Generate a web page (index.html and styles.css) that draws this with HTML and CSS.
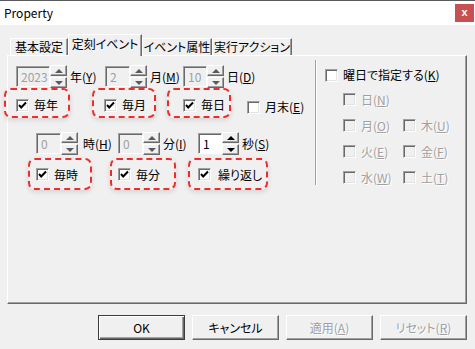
FILE: index.html
```html
<!DOCTYPE html>
<html lang="ja">
<head>
    <meta charset="UTF-8">
    <title>Property</title>
    <link rel="stylesheet" href="styles.css">
</head>
<body>
<div class="window">
    <div class="titlebar">
        <span class="title">Property</span>
        <span class="close">x</span>
    </div>

    <div class="tabs">
        <div class="tab tab-basic">基本設定</div>
        <div class="tab tab-event active">定刻イベント</div>
        <div class="tab tab-attr">イベント属性</div>
        <div class="tab tab-action">実行アクション</div>
    </div>

    <div class="pane">
        <div class="left">
            <!-- date spinners -->
            <div class="spin-row date-row">
                <div class="field year-field">
                    <div class="edit off wide">2023</div>
                    <div class="arrows dim"><span class="arrow up"></span><span class="arrow down"></span></div>
                    <span class="unit">年(<u>Y</u>)</span>
                </div>
                <div class="field month-field">
                    <div class="edit off">2</div>
                    <div class="arrows dim"><span class="arrow up"></span><span class="arrow down"></span></div>
                    <span class="unit">月(<u>M</u>)</span>
                </div>
                <div class="field">
                    <div class="edit off narrow">10</div>
                    <div class="arrows dim"><span class="arrow up"></span><span class="arrow down"></span></div>
                    <span class="unit">日(<u>D</u>)</span>
                </div>
            </div>

            <div class="mark-row date-marks">
                <label class="mark m-year">
                    <span class="cb"><svg viewBox="0 0 9 9"><polyline points="1,4 3.2,6.5 8,1.5"/></svg></span>
                    <span>毎年</span>
                </label>
                <label class="mark m-month">
                    <span class="cb"><svg viewBox="0 0 9 9"><polyline points="1,4 3.2,6.5 8,1.5"/></svg></span>
                    <span>毎月</span>
                </label>
                <label class="mark m-day">
                    <span class="cb"><svg viewBox="0 0 9 9"><polyline points="1,4 3.2,6.5 8,1.5"/></svg></span>
                    <span>毎日</span>
                </label>
                <label class="check month-end">
                    <span class="cb"></span>
                    <span>月末(<u>E</u>)</span>
                </label>
            </div>

            <!-- time spinners -->
            <div class="spin-row time-row">
                <div class="field hour-field">
                    <div class="edit off">0</div>
                    <div class="arrows dim"><span class="arrow up"></span><span class="arrow down"></span></div>
                    <span class="unit gap5">時(<u>H</u>)</span>
                </div>
                <div class="field minute-field">
                    <div class="edit off">0</div>
                    <div class="arrows dim"><span class="arrow up"></span><span class="arrow down"></span></div>
                    <span class="unit">分(<u>I</u>)</span>
                </div>
                <div class="field">
                    <div class="edit narrow">1</div>
                    <div class="arrows"><span class="arrow up"></span><span class="arrow down"></span></div>
                    <span class="unit">秒(<u>S</u>)</span>
                </div>
            </div>

            <div class="mark-row time-marks">
                <label class="mark m-hour">
                    <span class="cb"><svg viewBox="0 0 9 9"><polyline points="1,4 3.2,6.5 8,1.5"/></svg></span>
                    <span>毎時</span>
                </label>
                <label class="mark m-minute">
                    <span class="cb"><svg viewBox="0 0 9 9"><polyline points="1,4 3.2,6.5 8,1.5"/></svg></span>
                    <span>毎分</span>
                </label>
                <label class="mark m-repeat">
                    <span class="cb"><svg viewBox="0 0 9 9"><polyline points="1,4 3.2,6.5 8,1.5"/></svg></span>
                    <span>繰り返し</span>
                </label>
            </div>
        </div>

        <!-- weekday group -->
        <div class="group">
            <label class="check">
                <span class="cb"></span>
                <span>曜日で指定する(<u>K</u>)</span>
            </label>
            <div class="days">
                <div class="day-row">
                    <span class="check off"><span class="cb"></span><span>日(<u>N</u>)</span></span>
                </div>
                <div class="day-row">
                    <span class="check off"><span class="cb"></span><span>月(<u>O</u>)</span></span>
                    <span class="check off"><span class="cb"></span><span>木(<u>U</u>)</span></span>
                </div>
                <div class="day-row">
                    <span class="check off"><span class="cb"></span><span>火(<u>E</u>)</span></span>
                    <span class="check off"><span class="cb"></span><span>金(<u>F</u>)</span></span>
                </div>
                <div class="day-row">
                    <span class="check off"><span class="cb"></span><span>水(<u>W</u>)</span></span>
                    <span class="check off"><span class="cb"></span><span>土(<u>T</u>)</span></span>
                </div>
            </div>
        </div>
    </div>

    <div class="buttons">
        <button class="btn default">OK</button>
        <button class="btn">キャンセル</button>
        <button class="btn off">適用(<u>A</u>)</button>
        <button class="btn off">リセット(<u>R</u>)</button>
    </div>
</div>
</body>
</html>
```

FILE: styles.css
```css
* {
    box-sizing: border-box;
}
body {
    margin: 0;
    font-family: "Noto Sans CJK JP", sans-serif;
    font-size: 12px;
    line-height: 14px;
    font-feature-settings: "palt";
    color: #000;
    background-color: #f0f0f0;
}
u {
    text-decoration-thickness: 1px;
    text-underline-offset: 1px;
}

.window {
    width: 475px;
    height: 349px;
    overflow: hidden;
    background-color: #f0f0f0;
    border-top: 1px solid #5a5a5a;
}

/* title bar */
.titlebar {
    height: 24px;
    display: flex;
    justify-content: space-between;
    align-items: flex-start;
    padding-left: 4px;
    background-color: #fff;
}
.title {
    margin-top: 5px;
    font-size: 12px;
}
.close {
    width: 19px;
    height: 18px;
    margin-top: 3px;
    margin-right: 1px;
    background-color: #c75050;
    color: #fff;
    font-family: "Liberation Sans", sans-serif;
    font-weight: bold;
    font-size: 11px;
    line-height: 16px;
    text-align: center;
}

/* tabs */
.tabs {
    height: 30px;
    display: flex;
    align-items: flex-end;
    padding-left: 10px;
}
.tab {
    height: 17px;
    border: 1px solid #fff;
    border-right-color: #696969;
    border-bottom: none;
    box-shadow: inset -1px 0 #a0a0a0;
    text-align: center;
    line-height: 16px;
    white-space: nowrap;
}
.tab.active {
    position: relative;
    z-index: 1;
    height: 22px;
    margin-bottom: -1px;
    background-color: #f0f0f0;
    line-height: 18px;
}
.tab-basic { width: 58px; }
.tab-event { width: 74px; }
.tab-attr { width: 70px; }
.tab-action { width: 80px; }

/* tab page */
.pane {
    width: 460px;
    height: 249px;
    margin-left: 7px;
    display: flex;
    border: 1px solid #fff;
    border-right-color: #696969;
    border-bottom-color: #696969;
    box-shadow: inset -1px -1px #a0a0a0;
}
.left {
    width: 307px;
}

/* spinners */
.spin-row {
    height: 23px;
    display: flex;
    align-items: center;
}
.date-row {
    margin-top: 9px;
    padding-left: 8px;
}
.time-row {
    margin-top: 14px;
    padding-left: 28px;
}
.field {
    display: flex;
    align-items: center;
}
.year-field { width: 89px; }
.month-field { width: 78px; }
.hour-field { width: 82px; }
.minute-field { width: 80px; }

.edit {
    width: 25px;
    height: 21px;
    padding: 3px 0 0 4px;
    background-color: #fff;
    border: 1px solid #a0a0a0;
    border-right-color: #fff;
    border-bottom-color: #fff;
    box-shadow: inset 1px 1px #696969;
}
.edit.wide { width: 34px; }
.edit.narrow { width: 24px; }
.edit.off {
    background-color: #f0f0f0;
    color: #a0a0a0;
}

.arrows {
    width: 17px;
    height: 23px;
    display: flex;
    flex-direction: column;
    justify-content: space-between;
}
.arrow {
    height: 11px;
    display: flex;
    align-items: center;
    justify-content: center;
    background-color: #f0f0f0;
    border: 1px solid #fff;
    border-right-color: #696969;
    border-bottom-color: #696969;
    box-shadow: inset -1px -1px #a0a0a0;
}
.arrow::after {
    content: "";
    border-left: 4px solid transparent;
    border-right: 4px solid transparent;
}
.arrow.up::after {
    border-bottom: 4px solid #000;
}
.arrow.down::after {
    border-top: 4px solid #000;
}
.arrows.dim .arrow.up::after { border-bottom-color: #5a5a5a; }
.arrows.dim .arrow.down::after { border-top-color: #5a5a5a; }

.unit {
    margin-left: 3px;
    white-space: nowrap;
}
.unit.gap5 { margin-left: 5px; }

/* checkboxes */
.check,
.mark {
    display: flex;
    align-items: center;
    gap: 5px;
    white-space: nowrap;
}
.cb {
    width: 13px;
    height: 13px;
    flex: none;
    display: flex;
    align-items: center;
    justify-content: center;
    background-color: #fff;
    border: 1px solid #a0a0a0;
    border-right-color: #fff;
    border-bottom-color: #fff;
    box-shadow: inset 1px 1px #696969, inset -1px -1px #e3e3e3;
}
.cb svg {
    width: 9px;
    height: 9px;
    fill: none;
    stroke: #000;
    stroke-width: 2;
}
.check.off {
    color: #a0a0a0;
    text-shadow: 1px 1px #fff;
}
.check.off .cb {
    background-color: #f0f0f0;
}

/* red dashed callouts */
.mark-row {
    display: flex;
    align-items: flex-start;
}
.date-marks {
    height: 30px;
}
.time-marks {
    height: 32px;
    margin-top: 3px;
}
.mark {
    border: 2px dashed #ee2c2c;
    border-radius: 7px;
    box-shadow: 0 2px 5px rgba(0, 0, 0, 0.12);
}
.date-marks .mark {
    height: 30px;
    padding-top: 4px;
}
.time-marks .mark {
    height: 32px;
    padding-top: 1px;
}
.m-year { width: 66px; margin-left: -4px; padding-left: 10px; }
.m-month { width: 64px; margin-left: 22px; padding-left: 10px; }
.m-day { width: 64px; margin-left: 11px; padding-left: 14px; }
.month-end { margin-left: 16px; margin-top: 12px; }
.m-hour { width: 64px; margin-left: 20px; padding-left: 6px; }
.m-minute { width: 66px; margin-left: 18px; padding-left: 6px; }
.m-repeat { width: 80px; margin-left: 12px; padding-left: 8px; gap: 7px; }

/* weekday group */
.group {
    width: 151px;
    height: 125px;
    margin-top: 4px;
    padding: 8px 0 0 9px;
    border-left: 1px solid #a0a0a0;
    box-shadow: inset 1px 0 #fff;
}
.days {
    margin-top: 11px;
    margin-left: 18px;
    display: flex;
    flex-direction: column;
    gap: 13px;
}
.day-row {
    height: 13px;
    display: flex;
}
.day-row .check {
    width: 60px;
}

/* dialog buttons */
.buttons {
    margin-top: 11px;
    padding-right: 8px;
    display: flex;
    justify-content: flex-end;
    gap: 7px;
}
.btn {
    width: 87px;
    height: 25px;
    padding: 0;
    font-family: inherit;
    font-size: 12px;
    font-feature-settings: "palt";
    color: #000;
    background-color: #f0f0f0;
    border: 1px solid #fff;
    border-right-color: #696969;
    border-bottom-color: #696969;
    box-shadow: inset -1px -1px #a0a0a0;
}
.btn.default {
    border-color: #3c3c3c;
    box-shadow: inset 1px 1px #fff, inset -1px -1px #696969, inset -2px -2px #a0a0a0;
}
.btn.off {
    color: #a0a0a0;
    text-shadow: 1px 1px #fff;
}
```
